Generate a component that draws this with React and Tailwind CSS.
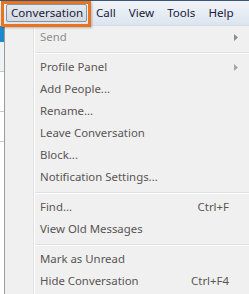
import React from "react";

const menuBar = ["Call", "View", "Tools", "Help"];

const items = [
  { label: "Send", disabled: true, submenu: true },
  { sep: true },
  { label: "Profile Panel", submenu: true },
  { label: "Add People..." },
  { label: "Rename..." },
  { label: "Leave Conversation" },
  { label: "Block..." },
  { label: "Notification Settings..." },
  { sep: true },
  { label: "Find...", shortcut: "Ctrl+F" },
  { label: "View Old Messages" },
  { sep: true },
  { label: "Mark as Unread" },
  { label: "Hide Conversation", shortcut: "Ctrl+F4" },
];

const Arrow = ({ disabled }) => (
  <svg width="4" height="7" viewBox="0 0 4 7" className="absolute right-[11px] top-[8px]">
    <path d="M0 0 L4 3.5 L0 7 Z" fill={disabled ? "#8c8c8c" : "#a6a6a6"} />
  </svg>
);

const App = () => {
  return (
    <div className="relative w-[249px] h-[294px] overflow-hidden bg-[#f0f0f0] font-['Segoe_UI','Noto_Sans',sans-serif]">
      {/* menu bar */}
      <div className="h-[26px] flex flex-col bg-gradient-to-b from-[#f2f5f9] to-[#dbe4ef]">
        <div className="h-px bg-[#3b5677]" />
        <div className="flex items-center h-[24px] text-[11.6px] text-[#1c1a38]">
          <div className="ml-[6px] h-[18px] w-[81px] flex items-center pl-[4px] rounded-[2px] border border-[#8d9299] bg-gradient-to-b from-[#e3e8ee] to-[#d3dae3]">
            Conversation
          </div>
          <div className="ml-[9px] flex gap-[13px]">
            {menuBar.map((m) => (
              <span key={m}>{m}</span>
            ))}
          </div>
        </div>
        <div className="h-px bg-[#d3dbe5]" />
      </div>

      {/* highlight box */}
      <div className="absolute left-[1px] top-[1px] w-[90px] h-[26px] border-[3px] border-[#e8751d] shadow-[1px_1px_2px_rgba(0,0,0,0.25)]" />

      <div className="flex h-[268px]">
        {/* background app sliver */}
        <div className="w-[4px] flex flex-col bg-white">
          <div className="h-[16px] bg-[#1b8bcb]" />
          <div className="h-[30px] border-b border-[#c9c9c9] bg-[#eef3f8]" />
          <div className="h-[40px] border-b border-[#c9c9c9]" />
          <div className="h-[30px] border-b border-[#c9c9c9]" />
          <div className="flex-1" />
        </div>
        <div className="w-px bg-[#9a9a9a]" />

        {/* dropdown */}
        <div className="flex-1 flex bg-[#f0f0f0]">
          <div className="w-[28px]" />
          <div className="w-px bg-[#e2e3e3]" />
          <div className="w-px bg-white" />
          <div className="flex-1 flex flex-col">
            {items.map((it, i) =>
              it.sep ? (
                <div key={i} className="h-[8px] pt-[4px]">
                  <div className="h-px bg-[#e0e0e0]" />
                  <div className="h-px bg-white" />
                </div>
              ) : (
                <div
                  key={i}
                  className={`relative h-[22px] flex items-center pl-[5px] pr-[20px] text-[11.4px] ${
                    it.disabled ? "text-[#8e8e8e]" : "text-[#5a5454]"
                  }`}
                >
                  <span className="flex-1">{it.label}</span>
                  {it.shortcut && <span>{it.shortcut}</span>}
                  {it.submenu && <Arrow disabled={it.disabled} />}
                </div>
              )
            )}
          </div>
        </div>
      </div>
    </div>
  );
};

export default App;
